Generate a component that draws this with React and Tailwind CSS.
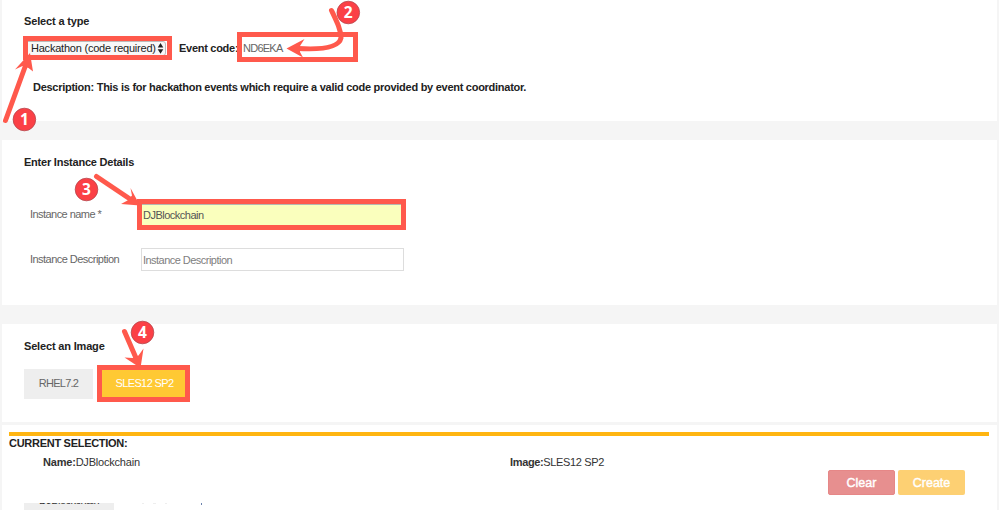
function Badge({ x, y, label }) {
  return (
    <g>
      <circle cx={x} cy={y} r="11.3" fill="#fb4046" stroke="#b5454b" strokeWidth="0.8" />
      <text
        x={x}
        y={y + 5.5}
        textAnchor="middle"
        fontFamily="'Noto Sans', 'Open Sans', sans-serif"
        fontWeight="700"
        fontSize="15.5"
        fill="#fff"
      >
        {label}
      </text>
    </g>
  );
}

function Annotations() {
  return (
    <svg
      className="pointer-events-none absolute top-0 left-0"
      width="999"
      height="510"
      viewBox="0 0 999 510"
      fill="none"
    >
      <g stroke="#ff594c" strokeWidth="5">
        <rect x="25.5" y="38.5" width="144" height="19" />
        <rect x="239.5" y="34.5" width="116" height="25" />
        <rect x="139.5" y="201.5" width="264" height="26" />
        <rect x="99.5" y="367.5" width="88" height="32" />
      </g>
      <g stroke="#ff594c" strokeWidth="5" strokeLinecap="round">
        <path d="M5.5 120.5L25 67" />
        <path d="M331.5 10.5C337 22 341 30 341 38C339 47 323 50 298 48.5" />
        <path d="M96.5 176.5L130 199" />
        <path d="M124.5 331.5L136 358" />
      </g>
      <g fill="#ff594c">
        <path d="M30 53L33 71.5L28.5 68L22.5 66L15 69.5Z" />
        <path d="M286.5 48.5L304.5 39L300 46L300 52L303 57.5Z" />
        <path d="M140 205.5L121 204L127.5 200.5L132 195.5L130.5 188Z" />
        <path d="M140.5 368L124.5 357.5L132.5 358L138.5 355.5L143.5 348.5Z" />
      </g>
      <Badge x={24.4} y={119.5} label="1" />
      <Badge x={348.3} y={12.5} label="2" />
      <Badge x={86.5} y={189.5} label="3" />
      <Badge x={142.5} y={332.5} label="4" />
    </svg>
  );
}

export default function App() {
  return (
    <div className="relative h-[510px] w-[999px] overflow-hidden bg-[#f5f5f5] pl-[2px] font-['Liberation_Sans',Arial,sans-serif] text-[11px] leading-4 whitespace-nowrap text-[#333]">
      <section className="h-[121px] w-[995px] bg-white pt-[13px] pl-[22px]">
        <h2 className="font-bold tracking-[-0.15px] text-[#222]">Select a type</h2>
        <div className="mt-[7px] flex h-[24px] items-center">
          <div className="flex h-[15px] w-[142px] items-center rounded-[3px] border border-[#bbb] bg-[#f8f8f8] pl-[6px] text-[#222]">
            <span className="w-[125px] tracking-[-0.22px]">Hackathon (code required)</span>
            <svg className="ml-px" width="7" height="11" viewBox="0 0 7 11" fill="#222">
              <path d="M3.5 0L6.3 4.5H.7ZM.7 6.2H6.3L3.5 10.7Z" />
            </svg>
          </div>
          <span className="ml-[13px] w-[59px] font-bold tracking-[-0.28px] text-[#222]">Event code:</span>
          <span className="ml-[5px] text-[11px] tracking-[-0.75px] text-[#666]">ND6EKA</span>
        </div>
        <p className="mt-[19px] ml-[9px] font-bold tracking-[-0.273px] text-[#222]">
          Description: This is for hackathon events which require a valid code provided by event coordinator.
        </p>
      </section>

      <section className="mt-[19px] h-[165px] w-[995px] bg-white pt-[14px] pl-[22px]">
        <h2 className="font-bold tracking-[-0.22px] text-[#222]">Enter Instance Details</h2>
        <div className="mt-[33px] flex h-[24px] items-center pl-[6px] text-[#666]">
          <span className="w-[111px] pb-[2px] tracking-[-0.55px]">Instance name *</span>
          <div className="flex h-[22px] w-[262px] items-center border border-[#b5b8b0] bg-[#faffbd] pl-[1px] tracking-[-0.5px] text-[#555]">
            DJBlockchain
          </div>
        </div>
        <div className="mt-[20px] flex h-[24px] items-center pl-[6px] text-[#666]">
          <span className="w-[111px] tracking-[-0.53px]">Instance Description</span>
          <div className="flex h-[23px] w-[263px] items-center border border-[#ddd] pt-[2px] pl-[1px] tracking-[-0.53px] text-[#808080]">
            Instance Description
          </div>
        </div>
      </section>

      <section className="mt-[19px] h-[98px] w-[995px] bg-white pt-[14px] pl-[22px]">
        <h2 className="font-bold tracking-[-0.17px] text-[#222]">Select an Image</h2>
        <div className="mt-[15px] flex gap-[5px]">
          <div className="flex h-[30px] w-[69px] items-center justify-center bg-[#eee] pb-[2px] tracking-[-0.75px] text-[#666]">RHEL7.2</div>
          <div className="flex h-[30px] w-[91px] items-center justify-center bg-[#ffc933] pb-[2px] pl-[2px] tracking-[-0.6px] text-white">SLES12 SP2</div>
        </div>
      </section>

      <footer className="mt-[3px] h-[85px] w-[995px] bg-white pt-[7px] pl-[7px]">
        <div className="h-[4px] w-[980px] bg-[#ffb511]" />
        <h2 className="h-[15px] leading-[15px] font-bold tracking-[-0.28px] text-[#222]">CURRENT SELECTION:</h2>
        <div className="mt-[3px] flex h-[16px] pl-[34px] tracking-[-0.2px] text-[#333]">
          <div className="w-[467px]"><b>Name:</b>DJBlockchain</div>
          <div className="tracking-[-0.35px]"><b>Image:</b>SLES12 SP2</div>
        </div>
        <div className="ml-[819px] flex gap-[3px] text-[12.5px] text-white [-webkit-text-stroke:0.4px_white]">
          <div className="flex h-[25px] w-[67px] items-center justify-center rounded-[2px] border border-[#e68787] bg-[#e78f8f]">Clear</div>
          <div className="flex h-[25px] w-[67px] items-center justify-center rounded-[2px] bg-[#fdd073]">Create</div>
        </div>
        <div className="mt-[8px] flex h-[7px] pl-[15px]">
          <div className="flex h-[7px] w-[90px] justify-center overflow-hidden bg-[#eee] tracking-[-0.55px] text-[#333]">
            <span className="-mt-[11px]">DJBlockchain</span>
          </div>
          <div className="ml-[28px] flex gap-[9px]">
            <i className="h-px w-[2px] bg-[#eee]" />
            <i className="h-px w-[3px] bg-[#eee]" />
            <i className="h-px w-[2px] bg-[#eee]" />
            <i className="ml-[25px] h-[2px] w-px bg-[#6b82ad]" />
          </div>
        </div>
      </footer>
      <Annotations />
    </div>
  );
}
